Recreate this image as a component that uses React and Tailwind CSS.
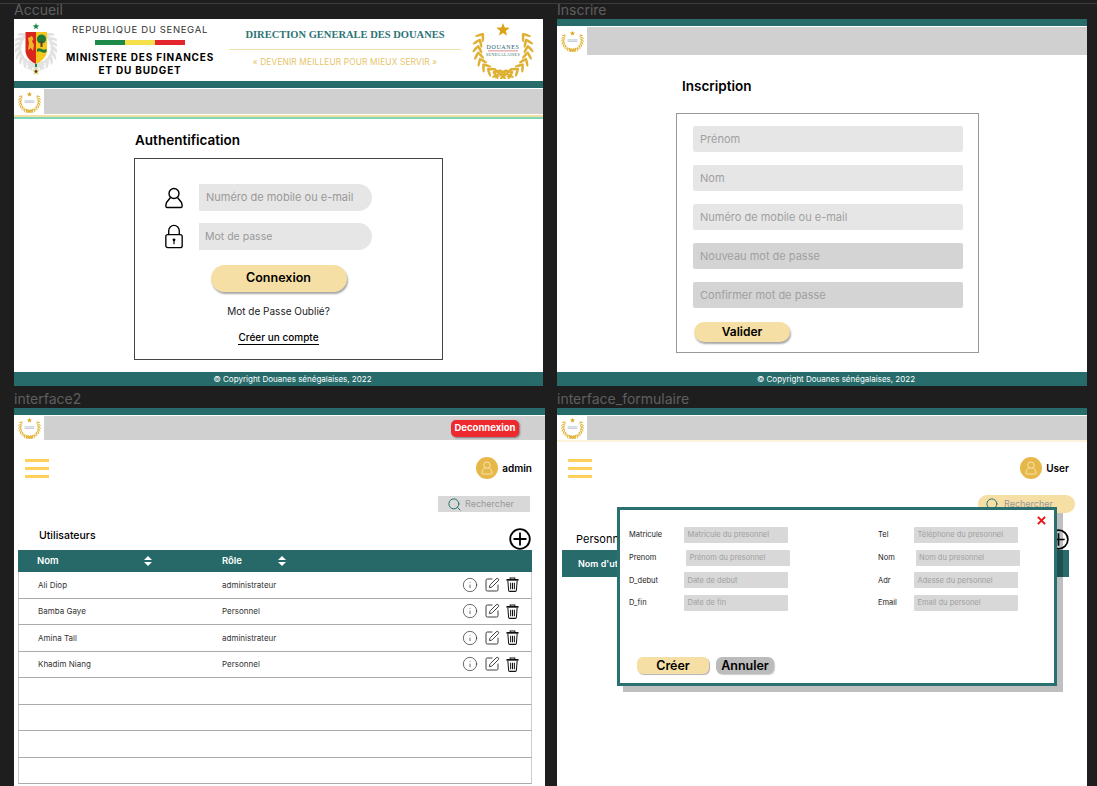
import { Info, Search, SquarePen } from 'lucide-react'

const font = { fontFamily: 'Inter, "Liberation Sans", sans-serif' }

function starPoints(cx, cy, r) {
  const pts = []
  for (let i = 0; i < 10; i++) {
    const rad = i % 2 ? r * 0.42 : r
    const a = (Math.PI / 5) * i - Math.PI / 2
    pts.push(`${(cx + rad * Math.cos(a)).toFixed(2)},${(cy + rad * Math.sin(a)).toFixed(2)}`)
  }
  return pts.join(' ')
}

function Branch({ color, cx = 32, cy = 28, r = 25, rx = 4.6, ry = 1.3, count = 10, step = 15 }) {
  const leaves = Array.from({ length: count }, (_, i) => {
    const deg = 82 + i * step
    const a = (deg * Math.PI) / 180
    return { x: cx + r * Math.cos(a), y: cy + r * Math.sin(a), deg }
  })
  return (
    <g>
      {leaves.map((l) => (
        <g key={l.deg}>
          <ellipse cx={l.x} cy={l.y} rx={rx} ry={ry} fill={color} transform={`rotate(${l.deg + 55} ${l.x} ${l.y}) translate(${-rx + 1} 0)`} />
          <ellipse cx={l.x} cy={l.y} rx={rx} ry={ry} fill={color} transform={`rotate(${l.deg + 125} ${l.x} ${l.y}) translate(${-rx + 1} 0)`} />
        </g>
      ))}
    </g>
  )
}

function Laurel({ className, big }) {
  return (
    <svg viewBox="0 0 64 58" className={className}>
      <Branch color="#dfb033" />
      <g transform="translate(64 0) scale(-1 1)">
        <Branch color="#dfb033" />
      </g>
      <path d="M24 57 L38 51 M40 57 L26 51" stroke="#dfb033" strokeWidth="1" />
      <polygon points={starPoints(32, 9, 7)} fill="#dca315" />
      {big ? (
        <>
          <rect x="14" y="21" width="36" height="17" fill="white" />
          <text x="32" y="28" textAnchor="middle" fontSize="6" letterSpacing="0.6" fill="#2a5f70" fontFamily="Liberation Serif, serif">DOUANES</text>
          <rect x="17" y="29.5" width="30" height="0.8" fill="#d86a70" />
          <text x="32" y="35" textAnchor="middle" fontSize="4" letterSpacing="0.4" fill="#2a6a60" fontFamily="Liberation Serif, serif">SENEGALAISES</text>
        </>
      ) : (
        <>
          <rect x="17" y="23" width="30" height="12" fill="white" />
          <rect x="19" y="25" width="26" height="2.5" fill="#9cc4c8" />
          <rect x="19" y="29" width="26" height="2.5" fill="#d8c8d8" />
        </>
      )}
    </svg>
  )
}

function CoatOfArms() {
  return (
    <svg viewBox="0 0 42 54" className="h-[54px] w-[42px]">
      <g transform="translate(-11 -3)">
        <Branch color="#e2e2e2" cx={32} cy={28} r={18} rx={4} ry={1.4} count={10} step={16.5} />
        <g transform="translate(64 0) scale(-1 1)">
          <Branch color="#e2e2e2" cx={32} cy={28} r={18} rx={4} ry={1.4} count={10} step={16.5} />
        </g>
      </g>
      <polygon points={starPoints(21, 3.5, 3.5)} fill="#1d8a4a" />
      <path d="M10.5 9 H21 V41 Q12 37 10.5 29 Z" fill="#d8281e" />
      <path d="M21 9 H32 V29 Q30 37 21 41 Z" fill="#f2c81c" />
      <path d="M13 27 L14 20 L13 15 L17 13 L18.5 16 L17 18 L19 22 L18 28 L16 25 Z" fill="#eeb72a" />
      <circle cx="26.5" cy="16" r="4.6" fill="#1f7a3a" />
      <rect x="25.5" y="18" width="2" height="6" fill="#6b3a1c" />
      <path d="M22 26 Q24 24.5 26.5 26 Q29 27.5 31.5 26 V29 Q29 30.5 26.5 29 Q24 27.5 22 29 Z" fill="#1f7a3a" />
      <polygon points={starPoints(21, 48.5, 4)} fill="#e6c35c" />
      <circle cx="21" cy="48.5" r="1.3" fill="#3a3a2a" />
      <rect x="20" y="41" width="2" height="3" fill="#1d8a4a" />
    </svg>
  )
}

function Frame({ label, width, height, labelClass, children }) {
  return (
    <div style={{ width }}>
      <div className={`text-[14px] text-[#5e5e5e] ${labelClass}`}>{label}</div>
      <div className="relative flex flex-col overflow-hidden bg-white" style={{ height }}>
        {children}
      </div>
    </div>
  )
}

function AppBar({ grayHeight, children }) {
  return (
    <div className="shrink-0">
      <div className="h-[7px] bg-[#286b6b]" />
      <div className="flex pt-px" style={{ height: grayHeight + 1 }}>
        <div className="flex w-[30px] shrink-0 items-center justify-center bg-white">
          <Laurel className="h-[22px] w-[25px]" />
        </div>
        <div className="flex flex-1 items-center justify-end bg-[#d0d0d0]">{children}</div>
      </div>
    </div>
  )
}

function Footer() {
  return (
    <div className="mt-auto flex h-[14px] items-center justify-center bg-[#286b6b] pl-[28px] text-[8px] text-white">
      © Copyright Douanes sénégalaises, 2022
    </div>
  )
}

function UserIcon({ className }) {
  return (
    <svg viewBox="0 0 20 22" fill="none" stroke="currentColor" strokeWidth="1.4" className={className}>
      <circle cx="10" cy="6.5" r="5" />
      <path d="M6.5 10.5 L2.5 15.5 Q1 20.5 3 20.5 H17 Q19 20.5 17.5 15.5 L13.5 10.5" strokeLinejoin="round" />
    </svg>
  )
}

function LockIcon() {
  return (
    <svg viewBox="0 0 20 26" fill="none" stroke="black" strokeWidth="1.4" className="h-[25px] w-[20px]">
      <path d="M4.5 11 V7 A5.5 5.5 0 0 1 15.5 7 V11" />
      <rect x="1.5" y="11" width="17" height="13.5" rx="2" />
      <circle cx="10" cy="16.5" r="1.5" fill="black" stroke="none" />
      <rect x="9.4" y="17" width="1.2" height="4" fill="black" stroke="none" />
    </svg>
  )
}

function TrashIcon() {
  return (
    <svg viewBox="0 0 14 16" className="h-[15px] w-[13px]" fill="none" stroke="#111" strokeWidth="1.1">
      <path d="M0.5 3 H13.5" strokeWidth="1.8" />
      <path d="M4.5 2.5 V1 H9.5 V2.5" />
      <path d="M2 4 L2.8 14.2 Q2.9 15.4 4 15.4 H10 Q11.1 15.4 11.2 14.2 L12 4" />
      <path d="M5 6 V13 M7 6 V13 M9 6 V13" />
    </svg>
  )
}

function Hamburger() {
  return (
    <div className="flex w-[24px] flex-col gap-[5px]">
      <div className="h-[3px] bg-[#ffd15c]" />
      <div className="h-[3px] bg-[#ffd15c]" />
      <div className="h-[3px] bg-[#ffd15c]" />
    </div>
  )
}

function Account({ name }) {
  return (
    <div className="flex items-center gap-[4px]">
      <div className="flex h-[22px] w-[22px] items-center justify-center rounded-full bg-[#e6b84a] text-[#fbe9b8]">
        <UserIcon className="h-[14px] w-[14px]" />
      </div>
      <span className="text-[10px] font-semibold text-black">{name}</span>
    </div>
  )
}

function PlusCircle({ className }) {
  return (
    <svg viewBox="0 0 22 22" fill="none" stroke="black" strokeWidth="1.8" className={className}>
      <circle cx="11" cy="11" r="9.8" />
      <path d="M11 4.5 V17.5 M4.5 11 H17.5" />
    </svg>
  )
}

function SortIcon() {
  return (
    <svg viewBox="0 0 8 10" className="h-[10px] w-[8px]" fill="white">
      <path d="M4 0 L8 4 H0 Z M4 10 L0 6 H8 Z" />
    </svg>
  )
}

function FilledInput({ text, dark }) {
  return (
    <div className={`flex h-[26px] items-center rounded-[2px] pl-[7px] text-[11px] text-[#a0a0a0] ${dark ? 'bg-[#d4d4d4]' : 'bg-[#e6e6e6]'}`}>
      {text}
    </div>
  )
}

function Accueil() {
  return (
    <Frame label="Accueil" width={529} height={367} labelClass="h-[15px] leading-[11px]">
      <div className="flex h-[62px] shrink-0 items-center pl-px">
        <CoatOfArms />
        <div className="ml-[8px] flex w-[150px] flex-col items-center text-black">
          <span className="text-[9.5px] leading-[12px] tracking-[0.07em] text-[#333]">REPUBLIQUE DU SENEGAL</span>
          <div className="mt-[4px] flex h-[5px] w-[91px]">
            <div className="flex-1 bg-[#1d8a4a]" />
            <div className="flex-1 bg-[#f5e04a]" />
            <div className="flex-1 bg-[#e3262e]" />
          </div>
          <span className="mt-[6px] text-[10px] font-bold leading-[13px] tracking-[0.08em]">MINISTERE DES FINANCES</span>
          <span className="text-[10px] font-bold leading-[13px] tracking-[0.08em]">ET DU BUDGET</span>
        </div>
        <div className="mb-[5px] ml-[14px] flex w-[232px] flex-col items-center">
          <span className="text-[10.5px] font-bold leading-[14px] text-[#2d7375]" style={{ fontFamily: '"Liberation Serif", serif' }}>
            DIRECTION GENERALE DES DOUANES
          </span>
          <div className="mt-[7px] h-px w-full bg-[#f3e0ae]" />
          <span className="mt-[7px] text-[8.3px] leading-[11px] tracking-[0.02em] text-[#e6c46a]">« DEVENIR MEILLEUR POUR MIEUX SERVIR »</span>
        </div>
        <Laurel big className="ml-[10px] h-[58px] w-[64px]" />
      </div>
      <AppBar grayHeight={25} />
      <div className="mt-px h-[2px] bg-[#f5dfa5]" />
      <div className="h-[2px] bg-[#7fd8b5]" />
      <div className="ml-[121px] mt-[13px] text-[13.5px] font-semibold leading-[17px] text-black">Authentification</div>
      <div className="ml-[120px] mt-[9px] flex h-[202px] w-[309px] flex-col items-center border border-[#444] pr-[20px] pt-[25px]">
        <div className="flex w-full items-center pl-[29px]">
          <UserIcon className="h-[22px] w-[20px] text-black" />
          <div className="ml-[15px] flex h-[27px] w-[173px] shrink-0 items-center rounded-r-full bg-[#e6e6e6] pl-[7px] text-[11px] text-[#999]">
            Numéro de mobile ou e-mail
          </div>
        </div>
        <div className="mt-[12px] flex w-full items-center pl-[29px]">
          <LockIcon />
          <div className="ml-[15px] flex h-[27px] w-[173px] shrink-0 items-center rounded-r-full bg-[#e6e6e6] pl-[6px] text-[10.5px] text-[#999]">
            Mot de passe
          </div>
        </div>
        <button className="mt-[15px] h-[27px] w-[136px] rounded-full bg-[#f5dfa5] text-[12.5px] font-semibold text-black shadow-[1px_2px_2px_rgba(0,0,0,0.35)]">
          Connexion
        </button>
        <p className="mt-[13px] text-[10px] leading-[13px] text-[#222]">Mot de Passe Oublié?</p>
        <p className="mt-[13px] border-b border-black text-[10px] font-medium leading-[13px] text-black">Créer un compte</p>
      </div>
      <Footer />
    </Frame>
  )
}

const signupFields = ['Prénom', 'Nom', 'Numéro de mobile ou e-mail', 'Nouveau mot de passe', 'Confirmer mot de passe']

function Inscrire() {
  return (
    <Frame label="Inscrire" width={530} height={367} labelClass="h-[15px] leading-[11px]">
      <AppBar grayHeight={28} />
      <div className="ml-[125px] mt-[23px] text-[13.5px] font-semibold leading-[17px] text-black">Inscription</div>
      <div className="ml-[119px] mt-[18px] flex h-[240px] w-[303px] flex-col border border-[#999] pl-[16px] pr-[15px] pt-[12px]">
        <div className="flex flex-col gap-[13px]">
          {signupFields.map((f, i) => (
            <FilledInput key={f} text={f} dark={i > 2} />
          ))}
        </div>
        <button className="ml-px mt-[14px] h-[20px] w-[96px] rounded-full bg-[#f5dfa5] text-[12px] font-semibold text-black shadow-[1px_2px_2px_rgba(0,0,0,0.35)]">
          Valider
        </button>
      </div>
      <Footer />
    </Frame>
  )
}

const users = [
  ['Ali Diop', 'administrateur'],
  ['Bamba Gaye', 'Personnel'],
  ['Amina Tall', 'administrateur'],
  ['Khadim Niang', 'Personnel'],
]

function Interface2() {
  return (
    <Frame label="interface2" width={531} height={378} labelClass="h-[17px] leading-[15px]">
      <AppBar grayHeight={24}>
        <button className="mr-[26px] h-[17px] w-[68px] rounded-[5px] bg-[#ee2a2f] text-[9.5px] font-bold text-white shadow-[1px_1px_2px_rgba(0,0,0,0.4)]">
          Deconnexion
        </button>
      </AppBar>
      <div className="mt-[17px] flex h-[22px] items-center justify-between pl-[11px] pr-[13px]">
        <Hamburger />
        <Account name="admin" />
      </div>
      <div className="ml-auto mr-[15px] mt-[17px] flex h-[16px] w-[92px] items-center gap-[3px] bg-[#d8d8d8] pl-[9px] text-[9px] text-[#999]">
        <Search size={15} strokeWidth={1.6} color="#2a7070" />
        Rechercher
      </div>
      <div className="mr-[14px] mt-[16px] flex h-[22px] items-center justify-between pl-[25px]">
        <span className="pb-[6px] text-[10.5px] font-medium text-black">Utilisateurs</span>
        <PlusCircle className="h-[22px] w-[22px]" />
      </div>
      <div className="ml-[4px] mr-[13px] flex h-[22px] items-center bg-[#266968] text-[9.5px] font-semibold text-white">
        <span className="ml-[19px] w-[107px]">Nom</span>
        <SortIcon />
        <span className="ml-[70px] w-[56px]">Rôle</span>
        <SortIcon />
      </div>
      <div className="ml-[4px] mr-[13px]">
        {users.map(([name, role]) => (
          <div key={name} className="flex h-[26.5px] items-center border-x border-b border-x-[#ccc] border-b-[#aaa] text-[8px] text-[#333]">
            <span className="ml-[19px] w-[184px]">{name}</span>
            <span className="flex-1">{role}</span>
            <div className="mr-[12px] flex items-center gap-[6px] text-[#222]">
              <Info size={16} strokeWidth={1} />
              <SquarePen size={16} strokeWidth={1.3} />
              <TrashIcon />
            </div>
          </div>
        ))}
        {[0, 1, 2, 3].map((i) => (
          <div key={i} className="h-[26.5px] border-x border-b border-x-[#ccc] border-b-[#aaa]" />
        ))}
      </div>
    </Frame>
  )
}

const leftFields = [
  ['Matricule', 'Matricule du presonnel', ''],
  ['Prenom', 'Prénom du presonnel', 'ml-[2px]'],
  ['D_debut', 'Date de debut', ''],
  ['D_fin', 'Date de fin', ''],
]
const rightFields = [
  ['Tel', 'Téléphone du presonnel', ''],
  ['Nom', 'Nom du presonnel', 'ml-[1.5px]'],
  ['Adr', 'Adesse du personnel', ''],
  ['Email', 'Email du personel', ''],
]

function ModalColumn({ fields, labelWidth, className }) {
  return (
    <div className={`flex flex-col gap-[6.7px] ${className}`}>
      {fields.map(([label, hint, nudge]) => (
        <div key={label} className="flex h-[16px] items-center">
          <span className="shrink-0 text-[7.5px] text-[#222]" style={{ width: labelWidth }}>{label}</span>
          <div className={`flex h-[16px] w-[104px] items-center rounded-[1px] bg-[#d8d8d8] pl-[3.5px] text-[7.5px] text-[#a0a0a0] ${nudge}`}>
            {hint}
          </div>
        </div>
      ))}
    </div>
  )
}

function InterfaceFormulaire() {
  return (
    <Frame label="interface_formulaire" width={530} height={378} labelClass="h-[17px] leading-[15px]">
      <AppBar grayHeight={24} />
      <div className="h-[2px] bg-[#fdf3dc]" />
      <div className="mt-[15px] flex h-[22px] items-center justify-between pl-[11px] pr-[18px]">
        <Hamburger />
        <Account name="User" />
      </div>
      <div className="ml-auto mr-[12px] mt-[16px] flex h-[18px] w-[97px] items-center gap-[4px] rounded-full bg-[#f5dfa5] pl-[7px] text-[9px] text-[#999]">
        <Search size={15} strokeWidth={1.6} color="#2a7070" />
        Rechercher
      </div>
      <div className="mr-[18px] mt-[15px] flex h-[22px] items-center justify-between pl-[19px]">
        <span className="text-[11px] text-black">Personn</span>
        <PlusCircle className="h-[21px] w-[21px]" />
      </div>
      <div className="ml-[5px] mr-[18px] flex h-[27px] items-center bg-[#286b6b] pl-[16px] text-[9px] font-semibold text-white">
        Nom d'uti
      </div>

      {/* fenetre modale */}
      <div className="absolute left-[60px] top-[99px] flex h-[179px] w-[440px] flex-col border-[3px] border-[#2a7070] bg-white shadow-[6px_6px_0_rgba(0,0,0,0.25)]">
        <svg viewBox="0 0 10 10" className="absolute right-[8px] top-[6px] h-[9px] w-[9px]" stroke="#ee1111" strokeWidth="2.2">
          <path d="M1 1 L9 9 M9 1 L1 9" />
        </svg>
        <div className="flex pl-[9px] pt-[17px]">
          <ModalColumn fields={leftFields} labelWidth={55} />
          <ModalColumn fields={rightFields} labelWidth={36} className="ml-[88px]" />
        </div>
        <div className="mt-auto flex gap-[7px] pb-[9px] pl-[17px]">
          <button className="h-[17px] w-[72px] rounded-[6px] bg-[#f5dfa5] text-[12.5px] font-semibold text-black shadow-[1px_1px_1px_rgba(0,0,0,0.3)]">
            Créer
          </button>
          <button className="h-[17px] w-[58px] rounded-[6px] bg-[#bbbbbb] text-[12.5px] font-semibold text-black shadow-[1px_1px_1px_rgba(0,0,0,0.2)]">
            Annuler
          </button>
        </div>
      </div>
    </Frame>
  )
}

export default function App() {
  return (
    <div className="h-[786px] w-[1097px] overflow-hidden bg-[#1e1e1e]" style={font}>
      <div className="h-[4px] border-b border-[#3c3c3c]" />
      <div className="flex h-[382px] gap-[14px] pl-[14px]">
        <Accueil />
        <Inscrire />
      </div>
      <div className="mt-[5px] flex gap-[12px] pl-[14px]">
        <Interface2 />
        <InterfaceFormulaire />
      </div>
    </div>
  )
}
